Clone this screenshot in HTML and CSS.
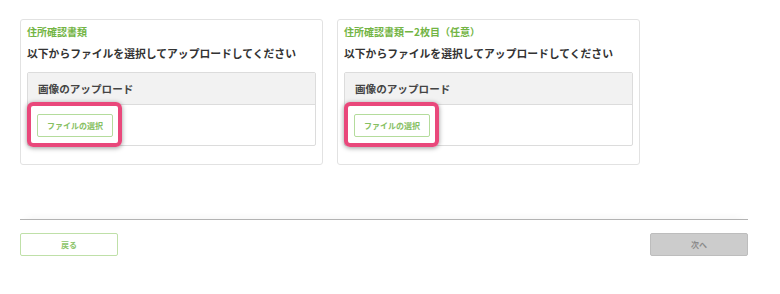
FILE: index.html
```html
<!DOCTYPE html>
<html lang="ja">
<head>
    <meta charset="UTF-8">
    <title>書類のアップロード</title>
    <link rel="stylesheet" href="styles.css">
</head>
<body>
    <div class="page">
        <div class="cards">
            <div class="card">
                <div class="card-label">住所確認書類</div>
                <div class="card-title">以下からファイルを選択してアップロードしてください</div>
                <div class="upload">
                    <div class="upload-head">画像のアップロード</div>
                    <div class="upload-body">
                        <span class="mark"></span>
                        <button class="file-btn">ファイルの選択</button>
                    </div>
                </div>
            </div>
            <div class="card">
                <div class="card-label">住所確認書類ー2枚目（任意）</div>
                <div class="card-title">以下からファイルを選択してアップロードしてください</div>
                <div class="upload">
                    <div class="upload-head">画像のアップロード</div>
                    <div class="upload-body">
                        <span class="mark"></span>
                        <button class="file-btn">ファイルの選択</button>
                    </div>
                </div>
            </div>
        </div>
        <div class="footer">
            <button class="nav-btn back">戻る</button>
            <button class="nav-btn next" disabled>次へ</button>
        </div>
    </div>
</body>
</html>
```

FILE: styles.css
```css
body {
    margin: 0;
    background-color: #fff;
    font-family: "Noto Sans CJK JP", "Noto Sans", sans-serif;
    color: #333;
}
.page {
    width: 728px;
    margin-left: 20px;
    padding-top: 19px;
}
.cards {
    display: flex;
    gap: 14px;
}
.card {
    box-sizing: border-box;
    width: 303px;
    border: 1px solid #e2e2e2;
    border-radius: 3px;
    padding: 5px 6px 18px;
}
.card-label {
    font-size: 10px;
    line-height: 14px;
    font-weight: 700;
    color: #72b443;
}
.card-title {
    margin-top: 6px;
    font-size: 10.8px;
    line-height: 16px;
    font-weight: 700;
    color: #333;
}
.upload {
    margin-top: 11px;
    border: 1px solid #dcdcdc;
    border-radius: 2px;
}
.upload-head {
    height: 31px;
    line-height: 31px;
    padding-left: 10px;
    background-color: #f2f2f2;
    border-bottom: 1px solid #dcdcdc;
    font-size: 10.6px;
    font-weight: 700;
    color: #444;
}
.upload-body {
    position: relative;
    padding: 9px 9px 8px;
}
.file-btn {
    box-sizing: border-box;
    display: block;
    width: 76px;
    height: 23px;
    padding: 0;
    border: 1px solid #b4dc9c;
    border-radius: 2px;
    background-color: #fff;
    font-family: inherit;
    font-size: 8px;
    font-weight: 700;
    color: #86c062;
}
/* annotation frame over the button */
.mark {
    position: absolute;
    left: -1px;
    top: -3px;
    box-sizing: border-box;
    width: 95px;
    height: 45px;
    border: 4px solid #e9487b;
    border-radius: 6px;
    box-shadow: 0 1px 5px rgba(0,0,0,0.4);
}
.footer {
    margin-top: 54px;
    padding-top: 13px;
    border-top: 1px solid #b3b3b3;
    box-shadow: 0 -6px 8px -6px rgba(0,0,0,0.06);
    display: flex;
    justify-content: space-between;
}
.nav-btn {
    box-sizing: border-box;
    width: 98px;
    height: 23px;
    padding: 0;
    border-radius: 2px;
    font-family: inherit;
    font-size: 8px;
    font-weight: 700;
}
.back {
    border: 1px solid #bfe0a8;
    background-color: #fff;
    color: #8cc46a;
}
.next {
    border: 1px solid #bdbdbd;
    background-color: #cccccc;
    color: #8a8a8a;
}
```
